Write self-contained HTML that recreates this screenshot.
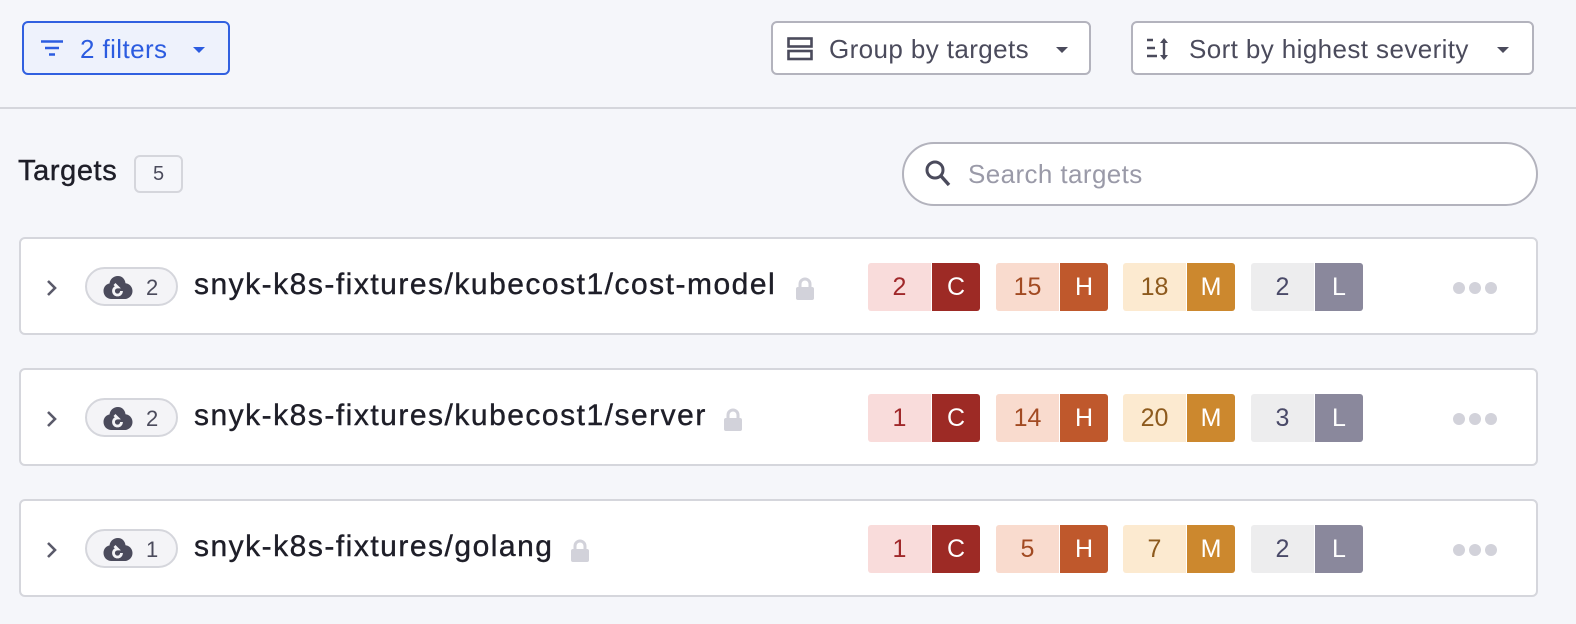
<!DOCTYPE html>
<html><head><meta charset="utf-8"><style>
*{box-sizing:border-box;margin:0;padding:0}
body{width:1576px;height:624px;background:#f5f6fa;font-family:"Liberation Sans",Arial,sans-serif;position:relative;overflow:hidden}
.abs{position:absolute}
.btn{position:absolute;top:21px;height:54px;border:2px solid #b3b3bd;border-radius:6px;background:#fff;display:flex;align-items:center;font-size:25px;color:#4b4b5c;letter-spacing:0.4px}
.caret{width:0;height:0;border-left:6px solid transparent;border-right:6px solid transparent;border-top:6px solid currentColor;position:absolute}
.row{position:absolute;left:19px;width:1519px;height:98px;background:#fff;border:2px solid #d5d6dc;border-radius:6px}
.chev{position:absolute;left:24px;top:39px}
.pill{position:absolute;left:64px;top:28px;width:93px;height:39px;border:2px solid #d5d6dc;border-radius:20px;background:#f4f4f7;color:#4b4b5c;font-size:22px}
.pill svg{position:absolute;left:15px;top:5px}
.pill span{position:absolute;left:59px;top:6px}
.name{position:absolute;left:173px;top:29px;font-size:30px;color:#1e1e28;letter-spacing:1.5px;-webkit-text-stroke:0.4px #1e1e28}
.lock{position:absolute;top:38px}
.sev{position:absolute;top:24px;height:48px;display:flex;border-radius:3px;overflow:hidden;font-size:25px}
.sev .n{width:63px;display:flex;align-items:center;justify-content:center}
.sev .l{width:48px;display:flex;align-items:center;justify-content:center;color:#fff;margin-left:1px;font-weight:500}
.c .n{background:#f9dcdb;color:#a0282a}.c .l{background:#9d2a25}
.h .n{background:#f9dbce;color:#a24a22}.h .l{background:#bf582c}
.m .n{background:#fcead0;color:#8d5a1d}.m .l{background:#cc882e}
.lo .n{background:#ededee;color:#4a4a68}.lo .l{background:#8a889c}
.dots{position:absolute;left:1432px;top:43px;display:flex;gap:4px}
.dots i{width:12px;height:12px;border-radius:50%;background:#d2d2da;display:block}
</style></head><body>

<div class="btn" style="left:22px;width:208px;border-color:#3160e0;background:#eef2fc;color:#2c5ce0">
 <svg class="abs" style="left:17px;top:17px" width="22" height="16" viewBox="0 0 22 16"><path d="M0 1.5h22M4 8h14M8 14.5h6" stroke="#2c5ce0" stroke-width="2.6"/></svg>
 <span class="abs" style="left:56px;top:11px;font-size:26px">2 filters</span>
 <div class="caret" style="left:169px;top:24px;color:#2c5ce0"></div>
</div>

<div class="btn" style="left:771px;width:320px">
 <svg class="abs" style="left:14px;top:14px" width="26" height="24" viewBox="0 0 26 24"><rect x="1.5" y="1.5" width="23" height="8" fill="none" stroke="#4b4b5c" stroke-width="2.6"/><rect x="1.5" y="14" width="23" height="8" fill="none" stroke="#4b4b5c" stroke-width="2.6"/></svg>
 <span class="abs" style="left:56px;top:11px;font-size:26px">Group by targets</span>
 <div class="caret" style="left:283px;top:24px"></div>
</div>

<div class="btn" style="left:1131px;width:403px">
 <svg class="abs" style="left:12px;top:13px" width="30" height="26" viewBox="0 0 30 26"><path d="M2 4h6M2 12h8M2 20h10" stroke="#4b4b5c" stroke-width="2.4"/><path d="M19 4v18" stroke="#4b4b5c" stroke-width="2.4"/><path d="M15 7l4-5 4 5zM15 19l4 5 4-5z" fill="#4b4b5c"/></svg>
 <span class="abs" style="left:56px;top:11px;font-size:26px">Sort by highest severity</span>
 <div class="caret" style="left:364px;top:24px"></div>
</div>

<div class="abs" style="left:0;top:107px;width:1576px;height:2px;background:#d5d6dc"></div>

<div class="abs" style="left:18px;top:155px;font-size:29px;color:#1e1e28;letter-spacing:0.6px;-webkit-text-stroke:0.4px #1e1e28">Targets</div>
<div class="abs" style="left:134px;top:155px;width:49px;height:38px;border:2px solid #d5d6dc;border-radius:6px;font-size:20px;color:#4b4b5c;text-align:center;line-height:34px">5</div>

<div class="abs" style="left:902px;top:142px;width:636px;height:64px;border:2px solid #b3b3bd;border-radius:32px;background:#fff">
 <svg class="abs" style="left:20px;top:15px" width="30" height="32" viewBox="0 0 30 32"><circle cx="11" cy="11" r="8" fill="none" stroke="#4b4b5c" stroke-width="3"/><path d="M17 17l8 9" stroke="#4b4b5c" stroke-width="3.4"/></svg>
 <span class="abs" style="left:64px;top:15px;font-size:26px;color:#9a9aa8;letter-spacing:0.4px">Search targets</span>
</div>

<!-- rows -->
<div class="row" style="top:237px">
 <svg class="chev" width="14" height="20" viewBox="0 0 14 20"><path d="M3 3l7 7-7 7" fill="none" stroke="#5a5a6a" stroke-width="2.6"/></svg>
 <div class="pill"><svg width="32" height="27" viewBox="0 0 32 27"><path d="M16 2c-5 0-8 3.5-8.5 7.5C4 10 1.5 13 1.5 17c0 4.5 3.5 8 8 8h13c4.5 0 8-3.5 8-8 0-4-3-7.5-7-7.8C23 5 20 2 16 2z" fill="#4b4b5c"/><path d="M19.5 17a4 4 0 1 1-4-4l-3-3" fill="none" stroke="#f4f4f7" stroke-width="2.8"/></svg><span>2</span></div>
 <div class="name">snyk-k8s-fixtures/kubecost1/cost-model</div>
 <svg class="lock" style="left:774px" width="20" height="24" viewBox="0 0 20 24"><path d="M5 10V7a5 5 0 0 1 10 0v3" fill="none" stroke="#d2d2da" stroke-width="3"/><rect x="1" y="10" width="18" height="13" rx="2" fill="#d2d2da"/></svg>
 <div class="sev c" style="left:847px"><div class="n">2</div><div class="l">C</div></div>
 <div class="sev h" style="left:975px"><div class="n">15</div><div class="l">H</div></div>
 <div class="sev m" style="left:1102px"><div class="n">18</div><div class="l">M</div></div>
 <div class="sev lo" style="left:1230px"><div class="n">2</div><div class="l">L</div></div>
 <div class="dots"><i></i><i></i><i></i></div>
</div>

<div class="row" style="top:368px">
 <svg class="chev" width="14" height="20" viewBox="0 0 14 20"><path d="M3 3l7 7-7 7" fill="none" stroke="#5a5a6a" stroke-width="2.6"/></svg>
 <div class="pill"><svg width="32" height="27" viewBox="0 0 32 27"><path d="M16 2c-5 0-8 3.5-8.5 7.5C4 10 1.5 13 1.5 17c0 4.5 3.5 8 8 8h13c4.5 0 8-3.5 8-8 0-4-3-7.5-7-7.8C23 5 20 2 16 2z" fill="#4b4b5c"/><path d="M19.5 17a4 4 0 1 1-4-4l-3-3" fill="none" stroke="#f4f4f7" stroke-width="2.8"/></svg><span>2</span></div>
 <div class="name">snyk-k8s-fixtures/kubecost1/server</div>
 <svg class="lock" style="left:702px" width="20" height="24" viewBox="0 0 20 24"><path d="M5 10V7a5 5 0 0 1 10 0v3" fill="none" stroke="#d2d2da" stroke-width="3"/><rect x="1" y="10" width="18" height="13" rx="2" fill="#d2d2da"/></svg>
 <div class="sev c" style="left:847px"><div class="n">1</div><div class="l">C</div></div>
 <div class="sev h" style="left:975px"><div class="n">14</div><div class="l">H</div></div>
 <div class="sev m" style="left:1102px"><div class="n">20</div><div class="l">M</div></div>
 <div class="sev lo" style="left:1230px"><div class="n">3</div><div class="l">L</div></div>
 <div class="dots"><i></i><i></i><i></i></div>
</div>

<div class="row" style="top:499px">
 <svg class="chev" width="14" height="20" viewBox="0 0 14 20"><path d="M3 3l7 7-7 7" fill="none" stroke="#5a5a6a" stroke-width="2.6"/></svg>
 <div class="pill"><svg width="32" height="27" viewBox="0 0 32 27"><path d="M16 2c-5 0-8 3.5-8.5 7.5C4 10 1.5 13 1.5 17c0 4.5 3.5 8 8 8h13c4.5 0 8-3.5 8-8 0-4-3-7.5-7-7.8C23 5 20 2 16 2z" fill="#4b4b5c"/><path d="M19.5 17a4 4 0 1 1-4-4l-3-3" fill="none" stroke="#f4f4f7" stroke-width="2.8"/></svg><span>1</span></div>
 <div class="name">snyk-k8s-fixtures/golang</div>
 <svg class="lock" style="left:549px" width="20" height="24" viewBox="0 0 20 24"><path d="M5 10V7a5 5 0 0 1 10 0v3" fill="none" stroke="#d2d2da" stroke-width="3"/><rect x="1" y="10" width="18" height="13" rx="2" fill="#d2d2da"/></svg>
 <div class="sev c" style="left:847px"><div class="n">1</div><div class="l">C</div></div>
 <div class="sev h" style="left:975px"><div class="n">5</div><div class="l">H</div></div>
 <div class="sev m" style="left:1102px"><div class="n">7</div><div class="l">M</div></div>
 <div class="sev lo" style="left:1230px"><div class="n">2</div><div class="l">L</div></div>
 <div class="dots"><i></i><i></i><i></i></div>
</div>

</body></html>
